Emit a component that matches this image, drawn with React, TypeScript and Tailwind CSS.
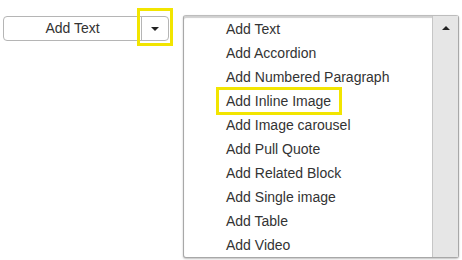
import React from 'react';

const items = [
  'Add Text',
  'Add Accordion',
  'Add Numbered Paragraph',
  'Add Inline Image',
  'Add Image carousel',
  'Add Pull Quote',
  'Add Related Block',
  'Add Single image',
  'Add Table',
  'Add Video',
];

const App = () => {
  return (
    <div className="relative w-[462px] h-[260px] bg-white font-['Liberation_Sans',Arial,sans-serif] text-[14px] text-[#333]">
      <div className="flex items-start">
        {/* split button */}
        <div className="ml-[3px] mt-[16px] flex h-[25px] w-[166px] rounded-[4px] border border-[#b5b5b5] bg-white">
          <div className="flex w-[138px] items-center justify-center border-r border-[#b5b5b5]">Add Text</div>
          <div className="flex flex-1 items-center justify-center">
            <svg width="8" height="4" viewBox="0 0 8 4">
              <path d="M0 0h8L4 4z" fill="#222" />
            </svg>
          </div>
        </div>

        {/* dropdown menu */}
        <div className="ml-[14px] mt-[15px] flex h-[243px] w-[276px] rounded-[3px] border border-[#a8a8a8] border-t-[#bdbdbd] bg-white shadow-[inset_0_2px_1px_#d0d0d0,0_1px_2px_rgba(0,0,0,0.25)]">
          <ul className="flex-1 pt-[1px]">
            {items.map((item) => (
              <li key={item} className="relative flex h-[24px] items-center pl-[42px]">
                {item === 'Add Inline Image' && (
                  <span className="absolute left-[32px] top-[-2px] h-[28px] w-[126px] border-[3px] border-[#f2e500]" />
                )}
                {item}
              </li>
            ))}
          </ul>
          <div className="flex w-[26px] justify-center border-l border-[#c6c6c6] bg-[#e6e6e6] pt-[10px]">
            <svg width="8" height="4" viewBox="0 0 8 4">
              <path d="M4 0l4 4H0z" fill="#222" />
            </svg>
          </div>
        </div>
      </div>

      {/* highlight around caret */}
      <span className="absolute left-[137px] top-[8px] h-[38px] w-[36px] border-[3px] border-[#f2e500]" />
    </div>
  );
};

export default App;
